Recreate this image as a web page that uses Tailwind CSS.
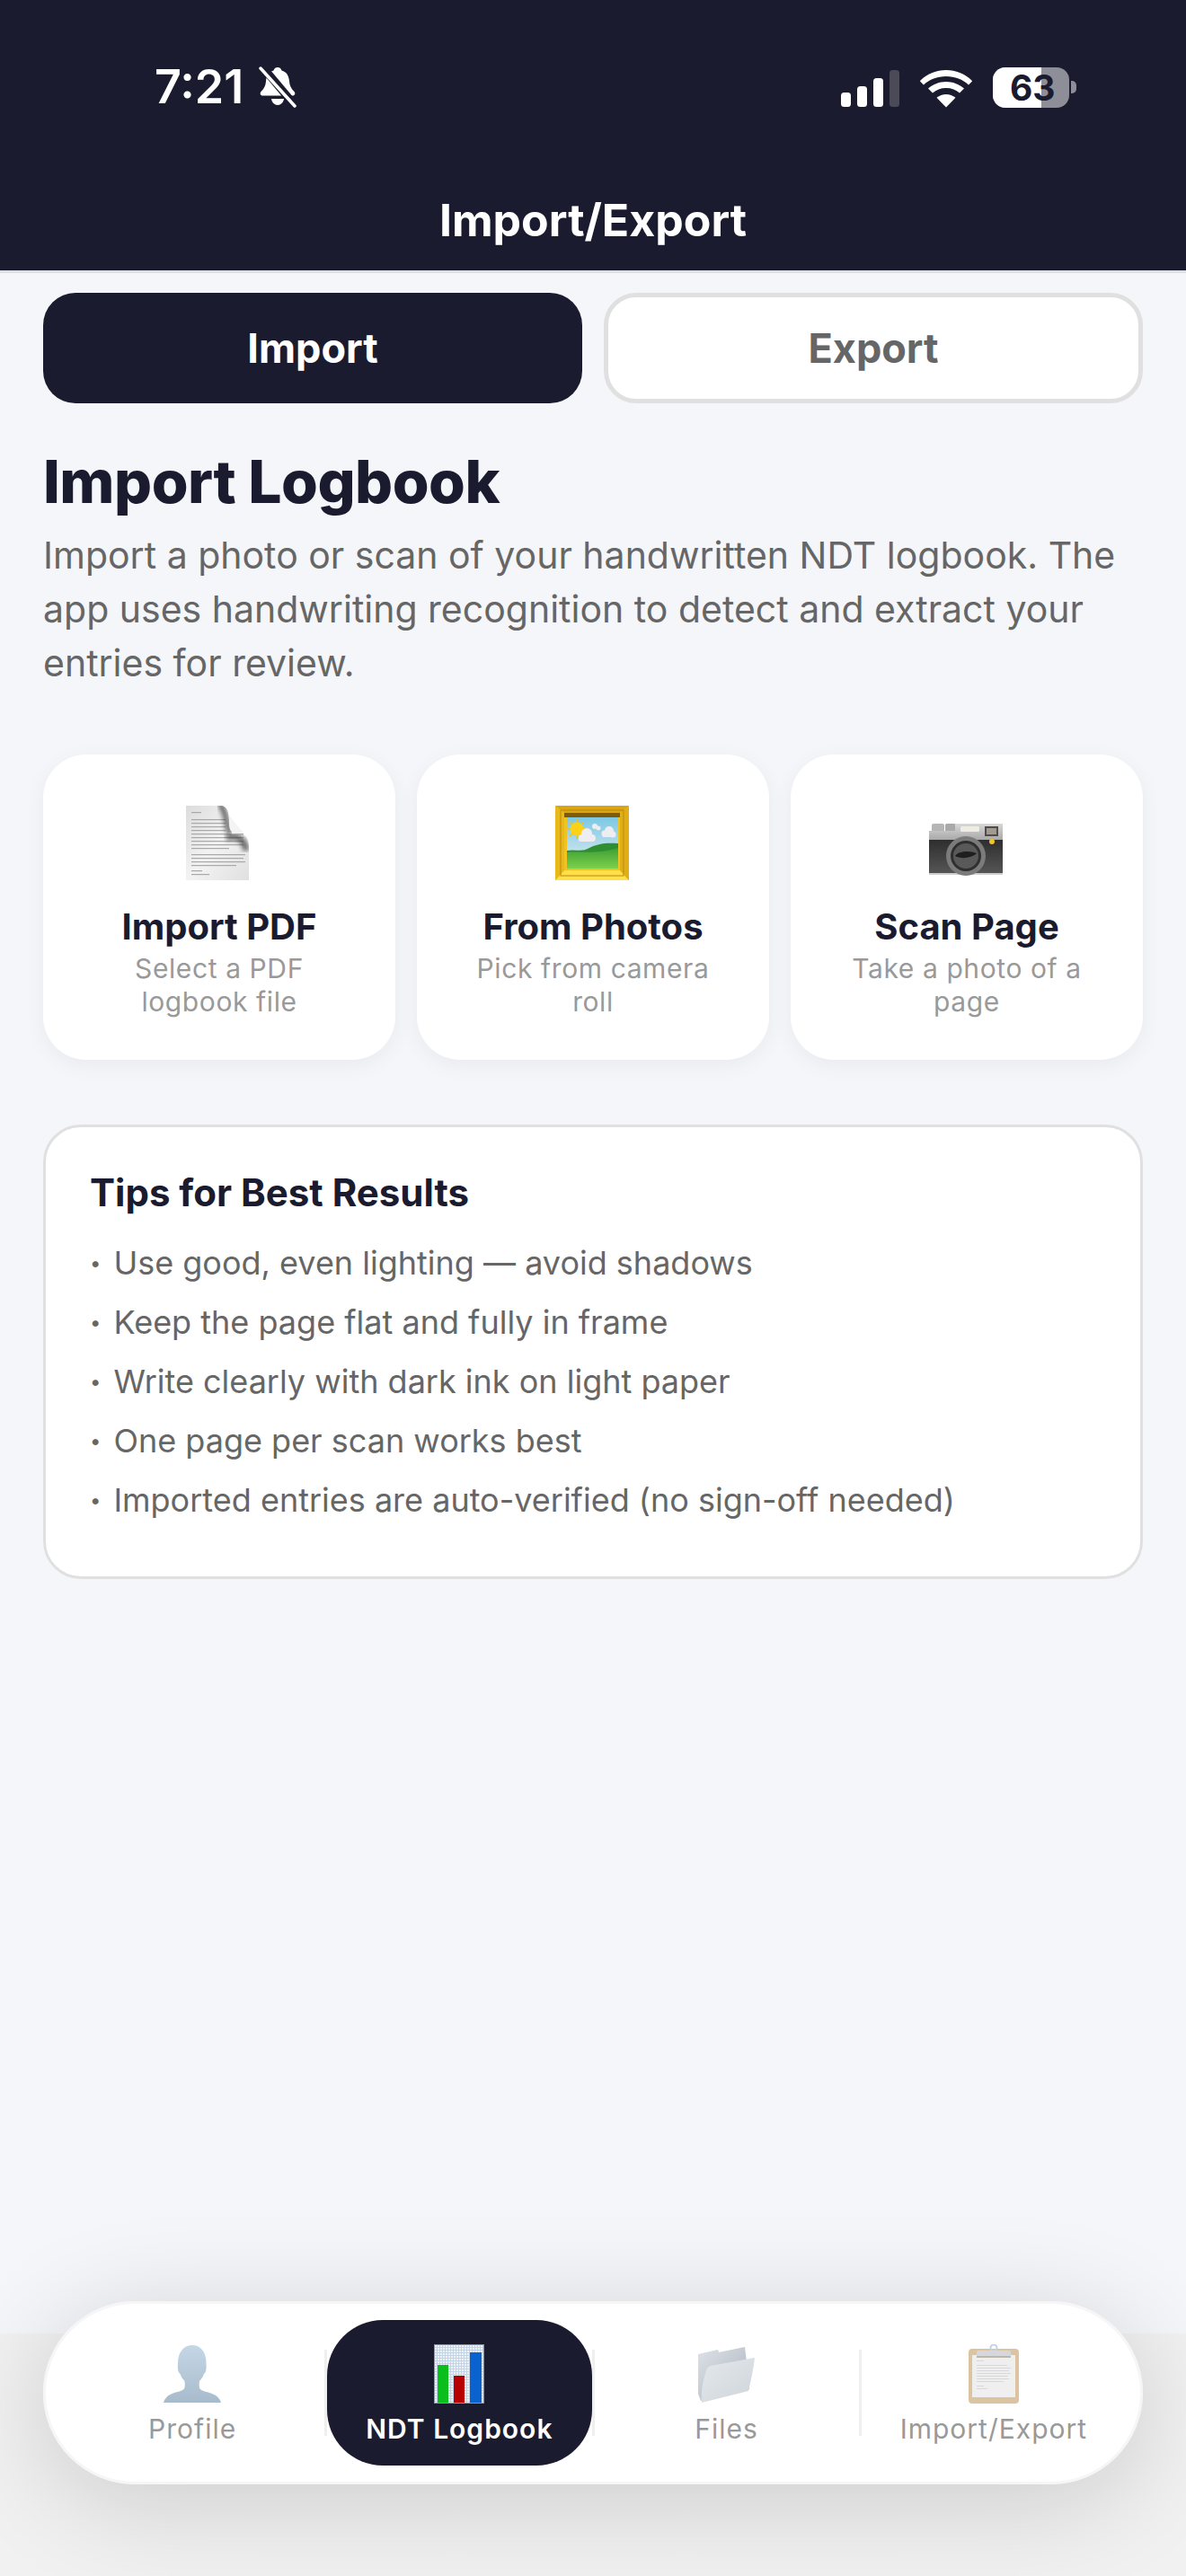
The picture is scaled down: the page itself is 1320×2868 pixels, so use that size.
<!DOCTYPE html>
<html lang="en">
<head>
    <meta charset="UTF-8">
    <meta name="viewport" content="width=device-width, initial-scale=1.0">
    <title>Import/Export</title>
    <script src="https://cdn.jsdelivr.net/npm/@tailwindcss/browser@4"></script>
</head>
<body class="m-0 bg-[#f5f6fa]">
<div class="relative w-[1320px] h-[2868px] overflow-hidden bg-[#f5f6fa] font-[Inter,sans-serif]">

    <!-- Header -->
    <header class="h-[304px] bg-[#1a1b2e] border-b-[3px] border-[#dfe0e3] flex flex-col">
        <div class="mt-[74px] h-[46px] flex justify-between pl-[172px] pr-[122px]">
            <div class="flex items-center gap-[17px]">
                <span class="text-[52px] leading-[46px] font-semibold text-white">7:21</span>
                <svg class="w-[42px] h-[46px]" viewBox="0 0 42 46">
                    <path fill="#fff" d="M21 1c2.600 0 4 1.800 4.500 3.500 5.500 1.500 8 6 8.500 12 .4 5 2 8 5.500 11.500 1.500 1.700 1 4.500-2 4.500H4.500c-3 0-3.500-2.800-2-4.500C6 24.500 7.600 21.500 8 16.500c.5-6 3-10.500 8.500-12C17 2.800 18.400 1 21 1z"/>
                    <path fill="#fff" d="M14 36h14c-.5 4-3.500 7-7 7s-6.500-3-7-7z"/>
                    <path stroke="#1a1b2e" stroke-width="9" d="M2 -2L44 48"/>
                    <path stroke="#fff" stroke-width="3.500" stroke-linecap="round" d="M2 2L40 44"/>
                </svg>
            </div>
            <div class="flex items-center">
                <svg class="w-[66px] h-[42px] mt-[3px]" viewBox="0 0 66 42">
                    <rect x="0" y="25" width="11" height="16" rx="3.500" fill="#fff"/>
                    <rect x="18" y="18" width="11" height="23" rx="3.500" fill="#fff"/>
                    <rect x="36" y="9" width="11" height="32" rx="3.500" fill="#fff"/>
                    <rect x="54" y="0" width="11" height="41" rx="3.500" fill="#4a4a58"/>
                </svg>
                <svg class="w-[58px] h-[42px] ml-[22px] mt-[3px]" viewBox="0 0 58 42">
                    <path fill="#fff" d="M29 0C18 0 8.500 4 .5 11.500a1 1 0 0 0 0 1.500L4 16.500C10.500 10.500 19 7 29 7s18.500 3.500 25 9.500l3.500-3.500a1 1 0 0 0 0-1.500C49.500 4 40 0 29 0z"/>
                    <path fill="#fff" d="M29 13c-7.500 0-14 2.700-20 7.600l5 5C18 22 23 20 29 20s11 2 15 5.600l5-5C43 15.700 36.500 13 29 13z"/>
                    <path fill="#fff" d="M29 27c-4 0-7.500 1.300-10.500 3.800L29 41.500l10.500-10.700C36.500 28.300 33 27 29 27z"/>
                </svg>
                <div class="relative w-[85px] h-[45px] ml-[23px] rounded-[14px] overflow-hidden bg-[#8e8e98]">
                    <div class="h-full w-[54px] bg-white"></div>
                    <span class="absolute inset-0 pl-[19px] flex items-center text-[39px] leading-none font-bold text-[#1a1b2e]">63</span>
                </div>
                <div class="w-[6px] h-[14px] ml-[2px] rounded-r-[5px] bg-[#8e8e98]"></div>
            </div>
        </div>
        <h1 class="mt-[95px] text-center text-[50px] leading-[60px] font-bold text-white">Import/Export</h1>
    </header>

    <main class="px-[48px]">
        <!-- Import / Export switch -->
        <div class="mt-[22px] grid grid-cols-2 gap-[24px]">
            <button class="h-[123px] rounded-[36px] bg-[#1a1b2e] text-white text-[45px] font-bold">Import</button>
            <button class="h-[123px] rounded-[36px] bg-white border-[5px] border-[#e0e0e0] text-[#666666] text-[45px] font-bold">Export</button>
        </div>

        <h2 class="mt-[47px] text-[66px] leading-[80px] font-extrabold text-[#1a1b2e] tracking-[-0.5px]">Import Logbook</h2>
        <p class="mt-[12px] text-[41px] leading-[60px] text-[#666666]">Import a photo or scan of your handwritten NDT logbook. The app uses handwriting recognition to detect and extract your entries for review.</p>

        <!-- Import sources -->
        <div class="mt-[72px] grid grid-cols-3 gap-[24px]">
            <div class="h-[340px] rounded-[48px] bg-white shadow-[0_6px_24px_rgba(26,27,46,0.05)] flex flex-col items-center pt-[57px] px-[24px]">
                <svg class="w-[84px] h-[84px]" viewBox="0 0 84 84">
                    <defs>
                        <linearGradient id="docPage" x1="0" y1="0" x2="1" y2="1">
                            <stop offset="0" stop-color="#dcdcdc"/>
                            <stop offset=".5" stop-color="#f3f3f3"/>
                            <stop offset="1" stop-color="#e0e0e0"/>
                        </linearGradient>
                        <filter id="soft1"><feGaussianBlur stdDeviation="2.500"/></filter>
                        <filter id="soft2"><feGaussianBlur stdDeviation=".4"/></filter>
                        <clipPath id="docClip"><path d="M5 0H44C50 0 53 6 53 18C53 25 54 30 60 30C70 30 75 35 75 46V83H5z"/></clipPath>
                    </defs>
                    <path d="M5 0H44C50 0 53 6 53 18C53 25 54 30 60 30C70 30 75 35 75 46V83H5z" fill="url(#docPage)"/>
                    <path d="M46 2L75 38C72 32 68 30 60 30C54 30 53 25 53 18C53 10 51 4 46 2z" fill="#f4f4f4"/>
                    <g fill="#a8a8a8" filter="url(#soft2)">
                        <rect x="11" y="7" width="11" height="1.200"/>
                        <rect x="11" y="15" width="38" height="1.200"/>
                        <rect x="11" y="19" width="38" height="1.200"/>
                        <rect x="11" y="23" width="38" height="1.200"/>
                        <rect x="11" y="27" width="38" height="1.200"/>
                        <rect x="11" y="31" width="58" height="1.200"/>
                        <rect x="11" y="35" width="58" height="1.200"/>
                        <rect x="11" y="39" width="58" height="1.200"/>
                        <rect x="11" y="43" width="58" height="1.200"/>
                        <rect x="11" y="47" width="42" height="1.200"/>
                        <rect x="11" y="54" width="60" height="1.200"/>
                        <rect x="11" y="58" width="58" height="1.200"/>
                        <rect x="11" y="62" width="60" height="1.200"/>
                        <rect x="11" y="66" width="50" height="1.200"/>
                        <rect x="11" y="72" width="12" height="1.200"/>
                        <rect x="11" y="76" width="20" height="1.200"/>
                    </g>
                    <g clip-path="url(#docClip)" opacity=".7">
                        <path d="M42 -2C50 4 50 24 54 32" stroke="#333" stroke-width="6" fill="none" filter="url(#soft1)"/>
                        <path d="M50 36C60 32 70 36 72 50" stroke="#333" stroke-width="7" fill="none" filter="url(#soft1)"/>
                    </g>
                </svg>
                <div class="mt-[24px] text-[40px] leading-[54px] font-bold text-[#1a1b2e]">Import PDF</div>
                <div class="text-[30px] leading-[37px] tracking-[0.6px] mt-[1px] text-[#999999] text-center">Select a PDF<br>logbook file</div>
            </div>
            <div class="h-[340px] rounded-[48px] bg-white shadow-[0_6px_24px_rgba(26,27,46,0.05)] flex flex-col items-center pt-[57px] px-[24px]">
                <svg class="w-[84px] h-[84px]" viewBox="0 0 84 84">
                    <defs>
                        <linearGradient id="sky" x1="0" y1="0" x2="0" y2="1">
                            <stop offset="0" stop-color="#7cc8e4"/>
                            <stop offset="1" stop-color="#e4edf1"/>
                        </linearGradient>
                        <linearGradient id="grass" x1="0" y1="0" x2="0" y2="1">
                            <stop offset="0" stop-color="#3f9f36"/>
                            <stop offset="1" stop-color="#7cd04a"/>
                        </linearGradient>
                    </defs>
                    <rect x="0" y="0" width="82" height="83" rx="1" fill="#f0c420"/>
                    <path d="M0 0H82L72 8H10z" fill="#d9a514"/>
                    <path d="M0 83H82L72 72H10z" fill="#ffe04a"/>
                    <path d="M0 0V83L10 72V8z" fill="#e8b81c"/>
                    <path d="M82 0V83L72 72V8z" fill="#e0ae16"/>
                    <rect x="6" y="5" width="70" height="73" fill="none" stroke="#b98a0d" stroke-width="1"/>
                    <rect x="10" y="8" width="62" height="5" fill="#7a5c0c"/>
                    <rect x="13" y="13" width="57" height="57" fill="url(#sky)"/>
                    <g stroke="#f5c400" stroke-width="1.500">
                        <path d="M24 15V37M13 26H35M16 18L32 34M32 18L16 34"/>
                    </g>
                    <circle cx="24" cy="26" r="7.500" fill="#fcd116"/>
                    <g fill="#eeedf1">
                        <circle cx="30" cy="36" r="4"/><circle cx="35" cy="31" r="6"/><circle cx="41" cy="36" r="4"/><rect x="26" y="35" width="18" height="5" rx="2.500"/>
                        <circle cx="44" cy="23" r="3"/><circle cx="48" cy="25" r="2.500"/>
                        <circle cx="55" cy="31" r="3.500"/><circle cx="60" cy="28" r="5"/><circle cx="64" cy="32" r="3.500"/><rect x="52" y="31" width="15" height="4" rx="2"/>
                    </g>
                    <path d="M13 70V50C22 48 30 52 38 47C46 43 54 41 70 42V70z" fill="#2f8f30"/>
                    <path d="M13 70V52C26 50 44 55 70 47V70z" fill="url(#grass)"/>
                </svg>
                <div class="mt-[24px] text-[40px] leading-[54px] font-bold text-[#1a1b2e]">From Photos</div>
                <div class="text-[30px] leading-[37px] tracking-[0.6px] mt-[1px] text-[#999999] text-center">Pick from camera<br>roll</div>
            </div>
            <div class="h-[340px] rounded-[48px] bg-white shadow-[0_6px_24px_rgba(26,27,46,0.05)] flex flex-col items-center pt-[57px] px-[24px]">
                <svg class="w-[84px] h-[84px]" viewBox="0 0 84 84">
                    <defs>
                        <linearGradient id="silver" x1="0" y1="0" x2="0" y2="1">
                            <stop offset="0" stop-color="#d8d8d8"/>
                            <stop offset="1" stop-color="#a9a9a9"/>
                        </linearGradient>
                        <linearGradient id="camBody" x1="0" y1="0" x2="0" y2="1">
                            <stop offset="0" stop-color="#2e2e2e"/>
                            <stop offset="1" stop-color="#555"/>
                        </linearGradient>
                    </defs>
                    <rect x="3" y="20" width="14" height="9" rx="2" fill="#b5b5b5"/>
                    <rect x="18" y="20" width="12" height="9" rx="2" fill="#a9a9a9"/>
                    <path d="M0 28H29V20H82V38H0z" fill="url(#silver)"/>
                    <rect x="35" y="23" width="21" height="6" rx="1.500" fill="#efece3"/>
                    <rect x="62" y="23" width="15" height="11" fill="#4d4d4d"/>
                    <rect x="64" y="25" width="11" height="7" fill="#a39a8f"/>
                    <rect x="0" y="38" width="82" height="37" fill="url(#camBody)"/>
                    <rect x="0" y="75" width="82" height="2" fill="#cfcfcf"/>
                    <circle cx="41" cy="56" r="22" fill="#7b7b7b"/>
                    <circle cx="41" cy="56" r="17" fill="#2f2f2f"/>
                    <circle cx="41" cy="56" r="14" fill="#595959"/>
                    <path d="M29 56C33 50 46 50 53 53C48 58 36 60 29 56z" fill="#1e1e1e"/>
                    <circle cx="70" cy="40" r="3" fill="#f2c521"/>
                </svg>
                <div class="mt-[24px] text-[40px] leading-[54px] font-bold text-[#1a1b2e]">Scan Page</div>
                <div class="text-[30px] leading-[37px] tracking-[0.6px] mt-[1px] text-[#999999] text-center">Take a photo of a<br>page</div>
            </div>
        </div>

        <!-- Tips -->
        <section class="mt-[72px] h-[506px] rounded-[42px] bg-white border-[3px] border-[#e0e0e0] pt-[46px] px-[49px]">
            <h3 class="text-[42px] leading-[54px] font-bold text-[#1a1b2e]">Tips for Best Results</h3>
            <ul class="mt-[18px] text-[36px] leading-[66px] text-[#666666]">
                <li class="flex items-center gap-[14px]"><span class="text-[22px]">•</span><span>Use good, even lighting — avoid shadows</span></li>
                <li class="flex items-center gap-[14px]"><span class="text-[22px]">•</span><span>Keep the page flat and fully in frame</span></li>
                <li class="flex items-center gap-[14px]"><span class="text-[22px]">•</span><span>Write clearly with dark ink on light paper</span></li>
                <li class="flex items-center gap-[14px]"><span class="text-[22px]">•</span><span>One page per scan works best</span></li>
                <li class="flex items-center gap-[14px]"><span class="text-[22px]">•</span><span>Imported entries are auto-verified (no sign-off needed)</span></li>
            </ul>
        </section>
    </main>

    <!-- Band behind the tab bar -->
    <div class="absolute left-0 right-0 top-[2598px] bottom-0 bg-[#f1f1f1]"></div>

    <!-- Floating tab bar -->
    <nav class="absolute left-[48px] bottom-[102px] w-[1224px] h-[204px] rounded-[102px] bg-white/95 border-[3px] border-[#f6f6f6] shadow-[0_18px_120px_rgba(0,0,0,0.16)] flex items-center px-[16px]">
        <a class="flex-1 h-[162px] flex flex-col items-center pt-[27px]">
            <svg class="w-[66px] h-[66px]" viewBox="0 0 66 66">
                <defs>
                    <linearGradient id="person" x1="0" y1="0" x2="0" y2="1">
                        <stop offset="0" stop-color="#c5d7e6"/>
                        <stop offset="1" stop-color="#a8bbcc"/>
                    </linearGradient>
                </defs>
                <path fill="url(#person)" d="M33 1C24 1 17 8 17 21c0 3-.5 6 .5 9 .5 2 1.500 2 2 3 1 3 3 6 5 8 .5 4 .5 8-1 9-3 3-10 3-15 6C4 58 2 62 1 65h64c-1-3-3-7-8-9-5-3-12-3-15-6-1.500-1-1.500-5-1-9 2-2 4-5 5-8 .5-1 1.500-1 2-3 1-3 .5-6 .5-9C48.500 8 42 1 33 1z"/>
            </svg>
            <span class="mt-[8px] text-[30px] leading-[40px] tracking-[1px] text-[#999999]">Profile</span>
        </a>
        <span class="w-[3px] h-[96px] bg-[#efefef]"></span>
        <a class="flex-1 h-[162px] rounded-[62px] bg-[#1a1b2e] flex flex-col items-center pt-[27px]">
            <svg class="w-[56px] h-[66px]" viewBox="0 0 56 66">
                <defs>
                    <pattern id="chartGrid" width="3" height="3" patternUnits="userSpaceOnUse">
                        <rect width="3" height="3" fill="#eef3f8"/>
                        <path d="M0 .5H3M.5 0V3" stroke="#c3d4e6" stroke-width="1"/>
                    </pattern>
                </defs>
                <rect width="56" height="66" fill="url(#chartGrid)"/>
                <rect x=".5" y=".5" width="55" height="65" fill="none" stroke="#8f96a3"/>
                <rect x="4" y="23" width="12" height="42" fill="#0abf1c"/>
                <rect x="22" y="35" width="12" height="30" fill="#b70000"/>
                <rect x="40" y="9" width="13" height="56" fill="#0a62cf"/>
            </svg>
            <span class="mt-[8px] text-[30px] leading-[40px] tracking-[1px] font-semibold text-white">NDT Logbook</span>
        </a>
        <span class="w-[3px] h-[96px] bg-[#efefef]"></span>
        <a class="flex-1 h-[162px] flex flex-col items-center pt-[27px]">
            <svg class="w-[66px] h-[66px]" viewBox="0 0 66 66">
                <defs>
                    <linearGradient id="folderBack" x1="0" y1="0" x2="1" y2="1">
                        <stop offset="0" stop-color="#dde2e7"/>
                        <stop offset="1" stop-color="#a9b2bb"/>
                    </linearGradient>
                    <linearGradient id="folderFront" x1="0" y1="0" x2="1" y2="1">
                        <stop offset="0" stop-color="#e4e8eb"/>
                        <stop offset="1" stop-color="#ced5da"/>
                    </linearGradient>
                </defs>
                <path fill="url(#folderBack)" d="M1 11L23 6L24 9L53 3L55 20L58 50L4 63L1 55z"/>
                <path fill="url(#folderFront)" d="M11 27C12 25 13 25 15 24L64 15C62 30 60 40 57 52L5 65C4 50 7 37 11 27z"/>
            </svg>
            <span class="mt-[8px] text-[30px] leading-[40px] tracking-[1px] text-[#999999]">Files</span>
        </a>
        <span class="w-[3px] h-[96px] bg-[#efefef]"></span>
        <a class="flex-1 h-[162px] flex flex-col items-center pt-[27px]">
            <svg class="w-[56px] h-[66px]" viewBox="0 0 56 66">
                <rect x="0" y="5" width="56" height="61" rx="4" fill="#dcc4a0"/>
                <rect x="4" y="12" width="48" height="47" fill="#efefef"/>
                <circle cx="28" cy="4" r="3.500" fill="none" stroke="#c5d2e0" stroke-width="2"/>
                <rect x="9" y="7" width="38" height="8" rx="2" fill="#d5d7da"/>
                <rect x="9" y="13" width="38" height="2" fill="#bcb6ab"/>
                <g fill="#d8d8d8">
                    <rect x="9" y="18" width="8" height="1"/>
                    <rect x="9" y="23" width="34" height="1"/>
                    <rect x="9" y="26" width="38" height="1"/>
                    <rect x="9" y="29" width="36" height="1"/>
                    <rect x="9" y="32" width="38" height="1"/>
                    <rect x="9" y="35" width="35" height="1"/>
                    <rect x="9" y="38" width="36" height="1"/>
                    <rect x="9" y="41" width="30" height="1"/>
                    <rect x="9" y="46" width="8" height="1"/>
                    <rect x="9" y="49" width="12" height="1"/>
                </g>
            </svg>
            <span class="mt-[8px] text-[30px] leading-[40px] tracking-[1px] text-[#999999]">Import/Export</span>
        </a>
    </nav>
</div>
</body>
</html>
